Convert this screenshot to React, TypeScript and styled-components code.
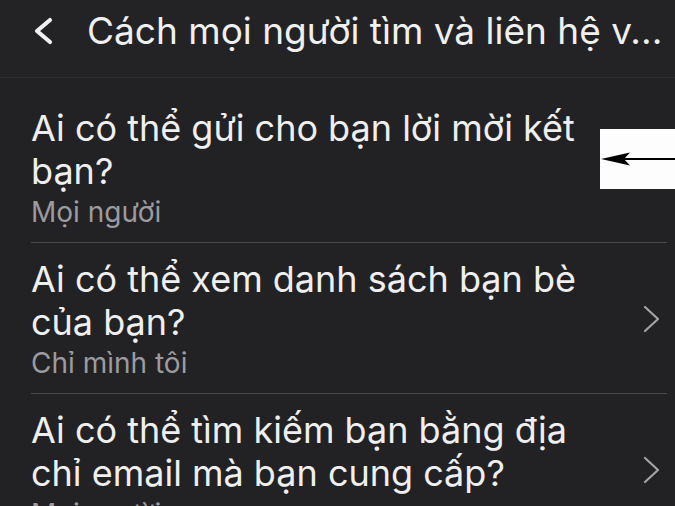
import React from "react";
import styled, { createGlobalStyle } from "styled-components";

const GlobalStyle = createGlobalStyle`
  html, body {
    margin: 0;
    padding: 0;
    background: #222224;
    overflow: hidden;
  }
  * {
    box-sizing: border-box;
  }
`;

const Screen = styled.div`
  position: relative;
  width: 675px;
  height: 506px;
  background: #222224;
  font-family: Inter, "Noto Sans", "Liberation Sans", sans-serif;
  color: #efeff0;
  overflow: hidden;
`;

const Header = styled.header`
  display: flex;
  align-items: flex-start;
  height: 78px;
  padding: 8px 0 0 33px;
  border-bottom: 1px solid #2e2e31;
  background: #232326;
`;

const BackButton = styled.button`
  display: flex;
  align-items: center;
  justify-content: center;
  width: 20px;
  height: 45px;
  margin-right: 34px;
  padding: 0;
  border: none;
  background: none;
  cursor: pointer;
`;

const HeaderTitle = styled.h1`
  margin: 0;
  font-size: 37px;
  line-height: 45px;
  font-weight: 400;
  white-space: nowrap;
  color: #f0f0f1;
`;

const List = styled.div`
  display: flex;
  flex-direction: column;
  padding-top: 14px;
`;

const Row = styled.div`
  display: flex;
  align-items: center;
  justify-content: space-between;
  gap: 20px;
  margin: 0 8px 0 31px;
  padding: 15px 7px 13px 0;
  border-bottom: 1px solid #4a4a4d;
`;

const RowText = styled.div`
  flex: 1;
  min-width: 0;
  max-width: 570px;
`;

const RowTitle = styled.div`
  font-size: 36px;
  line-height: 43px;
  font-weight: 400;
  color: #efeff0;
`;

const RowValue = styled.div`
  margin-top: 2px;
  font-size: 28px;
  line-height: 34px;
  color: #9b9ba0;
`;

const Chevron = styled.svg`
  flex: none;
  margin-left: auto;
`;

const Callout = styled.div`
  position: absolute;
  left: 600px;
  top: 129px;
  width: 75px;
  height: 60px;
  background: #fdfdfd;
`;

const BackIcon = () => (
  <svg width="20" height="28" viewBox="0 0 20 28">
    <polyline
      points="17,3 4,14 17,25"
      fill="none"
      stroke="#f0f0f1"
      strokeWidth="4.2"
      strokeLinecap="round"
      strokeLinejoin="round"
    />
  </svg>
);

const ChevronIcon = () => (
  <Chevron width="17" height="28" viewBox="0 0 17 28">
    <polyline
      points="2,2 15,14 2,26"
      fill="none"
      stroke="#a3a3a8"
      strokeWidth="2.2"
      strokeLinecap="round"
      strokeLinejoin="round"
    />
  </Chevron>
);

const ArrowIcon = () => (
  <svg width="75" height="60" viewBox="0 0 75 60">
    <line x1="20" y1="30" x2="75" y2="30" stroke="#000" strokeWidth="2.2" />
    <polygon points="1,30 30,23.5 24,30 30,36.5" fill="#000" />
  </svg>
);

const settings = [
  { title: "Ai có thể gửi cho bạn lời mời kết bạn?", value: "Mọi người" },
  { title: "Ai có thể xem danh sách bạn bè của bạn?", value: "Chỉ mình tôi" },
  {
    title: "Ai có thể tìm kiếm bạn bằng địa chỉ email mà bạn cung cấp?",
    value: "Mọi người",
  },
];

export default function App() {
  return (
    <Screen>
      <GlobalStyle />
      <Header>
        <BackButton aria-label="Quay lại">
          <BackIcon />
        </BackButton>
        <HeaderTitle>Cách mọi người tìm và liên hệ v...</HeaderTitle>
      </Header>
      <List>
        {settings.map((item) => (
          <Row key={item.title}>
            <RowText>
              <RowTitle>{item.title}</RowTitle>
              <RowValue>{item.value}</RowValue>
            </RowText>
            <ChevronIcon />
          </Row>
        ))}
      </List>
      <Callout>
        <ArrowIcon />
      </Callout>
    </Screen>
  );
}
